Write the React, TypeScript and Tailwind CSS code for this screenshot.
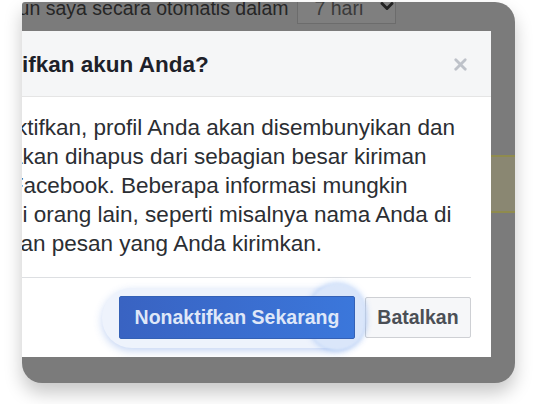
import React from "react";
import { X, ChevronDown } from "lucide-react";

const bodyLines = [
  { text: "nonaktifkan, profil Anda akan disembunyikan dan", shift: "ml-[-56px]" },
  { text: "akan dihapus dari sebagian besar kiriman", shift: "ml-[-12px]" },
  { text: "di Facebook. Beberapa informasi mungkin", shift: "ml-[-36px]" },
  { text: "bagi orang lain, seperti misalnya nama Anda di", shift: "ml-[-37px]" },
  { text: "dan pesan yang Anda kirimkan.", shift: "ml-[-14px]" },
];

const App = () => {
  return (
    <div className="w-[542px] h-[404px] bg-white overflow-hidden font-['Liberation_Sans',Arial,sans-serif]">
      <div className="ml-[22px] mt-[2px] w-[493px] h-[381px] bg-[#7b7b7b] rounded-tl-[3px] rounded-tr-[20px] rounded-b-[20px] overflow-hidden shadow-[0_10px_18px_rgba(0,0,0,0.22)] flex flex-col">
        {/* dimmed page behind the dialog */}
        <div className="h-[29px] flex items-start text-[19.5px] text-[#262626] leading-none">
          <span className="ml-[-24px] mt-[-3px] whitespace-nowrap">akun saya secara otomatis dalam</span>
          <div className="ml-[9px] w-[99px] h-[22px] shrink-0 border border-[#6c6c6c] border-t-0 bg-[#7f7f7f] flex items-start gap-[14px] pl-[16px]">
            <span className="mt-[-3px] whitespace-nowrap text-[#3a3a3a]">7 hari</span>
            <ChevronDown className="size-[20px] mt-[-6px] shrink-0 text-[#222]" strokeWidth={3.5} />
          </div>
        </div>

        <div className="flex">
          <div className="w-[469px] h-[326px] bg-white flex flex-col">
            <div className="h-[66px] bg-[#f5f6f7] border-b border-[#e5e5e5] flex items-center justify-between pr-[21px] pt-[2px]">
              <span className="text-[22.5px] font-bold text-[#1d2129] whitespace-nowrap">ifkan akun Anda?</span>
              <X className="size-[19px] text-[#bec2c9]" strokeWidth={3.5} />
            </div>

            <div className="overflow-hidden pt-[16px] text-[22.5px] leading-[29px] text-[#2b2e33]">
              {bodyLines.map((l) => (
                <div key={l.text} className={`whitespace-nowrap ${l.shift}`}>
                  {l.text}
                </div>
              ))}
            </div>

            <div className="mt-[19px] mr-[20px] border-t border-[#dddfe2]" />

            <div className="relative flex justify-end items-center gap-[10px] pr-[20px] pt-[18px]">
              <div className="relative">
                <div className="absolute left-[-17px] right-[-8px] top-[-8px] bottom-[-9px] rounded-full bg-[#eef3fc] shadow-[0_3px_9px_rgba(66,120,220,0.3)]" />
                <div className="absolute right-[-10px] top-[-12px] w-[56px] h-[66px] rounded-full bg-[#dae6fa] shadow-[0_0_6px_rgba(80,140,235,0.55)] blur-[1px]" />
                <button className="relative w-[236px] h-[43px] rounded-[2px] border border-[#3461b6] bg-gradient-to-r from-[#3963c2] to-[#3b77db] text-[19.5px] font-bold text-[#dfe7f8]">
                  Nonaktifkan Sekarang
                </button>
              </div>
              <button className="w-[106px] h-[41px] rounded-[2px] border border-[#ced0d4] bg-[#f6f7f9] text-[19.5px] font-bold text-[#4b4f56]">
                Batalkan
              </button>
            </div>
          </div>

          <div className="flex-1 flex flex-col">
            <div className="mt-[124px] h-[58px] bg-[#8a8772] border-y-2 border-[#8f8b4e]" />
          </div>
        </div>
      </div>
    </div>
  );
};

export default App;
